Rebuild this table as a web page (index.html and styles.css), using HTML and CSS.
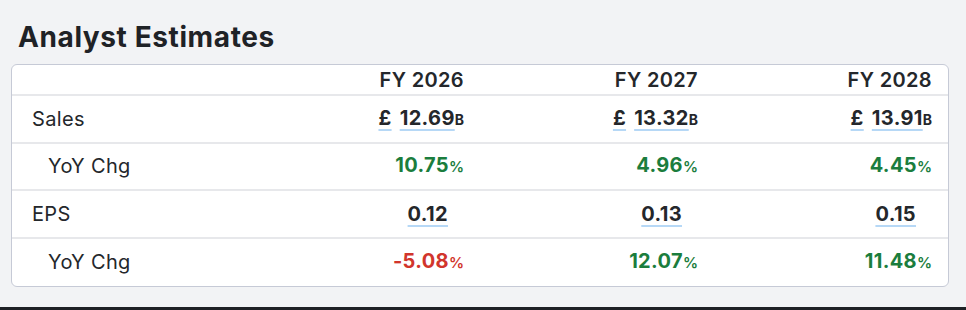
FILE: index.html
```html
<!DOCTYPE html>
<html>
<head>
<meta charset="utf-8">
<link rel="stylesheet" href="styles.css">
</head>
<body>
<div class="page">
  <h2 class="title">Analyst Estimates</h2>
  <div class="card">
    <div class="row head">
      <div class="cell label"></div>
      <div class="cell num">FY 2026</div>
      <div class="cell num">FY 2027</div>
      <div class="cell num">FY 2028</div>
    </div>
    <div class="row">
      <div class="cell label">Sales</div>
      <div class="cell num"><span class="u cur">£</span> <span class="u">12.69</span><span class="unit">B</span></div>
      <div class="cell num"><span class="u cur">£</span> <span class="u">13.32</span><span class="unit">B</span></div>
      <div class="cell num"><span class="u cur">£</span> <span class="u">13.91</span><span class="unit">B</span></div>
    </div>
    <div class="row">
      <div class="cell label sub">YoY Chg</div>
      <div class="cell num pos">10.75<span class="pct">%</span></div>
      <div class="cell num pos">4.96<span class="pct">%</span></div>
      <div class="cell num pos">4.45<span class="pct">%</span></div>
    </div>
    <div class="row">
      <div class="cell label">EPS</div>
      <div class="cell num eps"><span class="u">0.12</span></div>
      <div class="cell num eps"><span class="u">0.13</span></div>
      <div class="cell num eps"><span class="u">0.15</span></div>
    </div>
    <div class="row last">
      <div class="cell label sub">YoY Chg</div>
      <div class="cell num neg">-5.08<span class="pct">%</span></div>
      <div class="cell num pos">12.07<span class="pct">%</span></div>
      <div class="cell num pos">11.48<span class="pct">%</span></div>
    </div>
  </div>
</div>
<div class="bottom-bar"></div>
</body>
</html>
```

FILE: styles.css
```css
html, body {
  margin: 0;
  padding: 0;
  background: #f2f3f5;
  font-family: Inter, "Noto Sans", sans-serif;
  color: #24272b;
}
.page {
  height: 307px;
  padding: 0 17px 0 11px;
  box-sizing: border-box;
  overflow: hidden;
}
.title {
  margin: 0;
  padding: 20px 0 0 7px;
  height: 64px;
  box-sizing: border-box;
  font-size: 28px;
  font-weight: 700;
  line-height: 34px;
  letter-spacing: 0.6px;
  color: #1f2226;
}
.card {
  background: #fff;
  border: 1px solid #c6cad6;
  border-radius: 6px;
  width: 938px;
  box-sizing: border-box;
}
.row {
  display: grid;
  grid-template-columns: repeat(4, 1fr);
  height: 47.5px;
  border-bottom: 2px solid #e7e8eb;
  box-sizing: border-box;
  align-items: center;
}
.row.head {
  height: 31px;
}
.row.last {
  border-bottom: none;
  height: 47px;
}
.cell {
  font-size: 20px;
  line-height: 24px;
  letter-spacing: 0.35px;
}
.label {
  padding-left: 20px;
  font-weight: 400;
}
.label.sub {
  padding-left: 36px;
}
.num {
  text-align: right;
  padding-right: 16px;
  font-weight: 700;
}
.num.eps {
  padding-right: 32px;
}
.head .num {
  font-weight: 600;
}
.u {
  text-decoration: underline;
  text-decoration-color: #b6d8f6;
  text-decoration-thickness: 2px;
  text-underline-offset: 4px;
}
.cur {
  margin-right: 3px;
}
.unit {
  font-size: 14px;
  font-weight: 700;
  letter-spacing: 0;
}
.pct {
  font-size: 15px;
  font-weight: 600;
  letter-spacing: 0;
}
.pos {
  color: #1b7d3d;
}
.neg {
  color: #d1352c;
}
.bottom-bar {
  height: 3px;
  background: #1e2125;
}
```
